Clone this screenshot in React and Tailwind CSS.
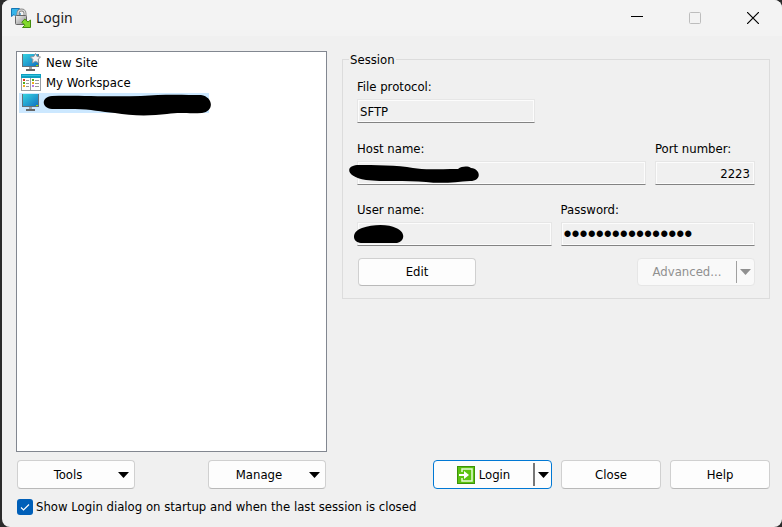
const fieldClass =
  'block h-6 w-full rounded-none border border-[#e6e6e6] border-b-[#838383] bg-[#f0f0f0] px-0.5 shadow-[inset_0_0_0_1px_#fcfcfc] outline-none';

const buttonClass =
  'flex items-center justify-center rounded border border-[#d0d0d0] border-b-[#b9b9b9] bg-[#fdfdfd]';

function Field({ id, label, className, inputClassName = '', children, ...input }) {
  return (
    <div className={className}>
      <label htmlFor={id} className="block h-4 leading-4">{label}</label>
      <div className="relative mt-1">
        <input id={id} readOnly className={`${fieldClass} ${inputClassName}`} {...input} />
        {children}
      </div>
    </div>
  );
}

function Arrow({ className = '' }) {
  return (
    <svg className={className} width="11" height="6" viewBox="0 0 11 6" fill="currentColor" aria-hidden="true">
      <path d="M0 0h11L5.500 6z" />
    </svg>
  );
}

function Monitor({ star }) {
  return (
    <svg width="20" height="20" viewBox="0 0 20 20" aria-hidden="true">
      <defs>
        <linearGradient id="screen" x1="0" y1="0" x2="1" y2="1">
          <stop offset="0" stopColor="#36d3df" />
          <stop offset="1" stopColor="#1173c4" />
        </linearGradient>
      </defs>
      <rect x="1" y="1" width="17" height="13" fill="#66707a" />
      <rect x="2" y="1" width="15" height="12" fill="url(#screen)" />
      <path d="M15 12h2v1h-2z" fill="#9be000" />
      <path d="M8 14h3v2H8z" fill="#a5a5a5" />
      <path d="M5 16h9v2H5z" fill="#666" />
      {star && (
        <path
          d="M14.500 0.500l1.500 3 3.500.400-2.300 2.500.600 3.400-3.300-1.500-3.100 1.600.500-3.500-2.400-2.400 3.400-.500z"
          fill="#f2f3f5"
          stroke="#8f949b"
          strokeWidth="1"
        />
      )}
    </svg>
  );
}

function Workspace() {
  return (
    <svg width="20" height="20" viewBox="0 0 20 20" aria-hidden="true">
      <rect x="0.500" y="2.500" width="19" height="15" fill="#fff" stroke="#9a9fa4" />
      <path d="M0 1h20v4H0z" fill="#0f9fc0" />
      <path d="M1 2h18v1H1z" fill="#35c3dd" />
      <path d="M9.500 5v12" stroke="#9a9fa4" />
      <path d="M2 6h2v2H2z" fill="#e0401c" />
      <path d="M2 9h2v2H2z" fill="#4fae1d" />
      <path d="M2 12h2v2H2z" fill="#f0ac1c" />
      <path d="M11 6h2v2h-2z" fill="#4fae1d" />
      <path d="M11 9h2v2h-2z" fill="#f0ac1c" />
      <path d="M11 12h2v2h-2z" fill="#b877e0" />
      <path d="M5 7.500h3M5 10.500h3M5 13.500h3M14 7.500h4M14 10.500h4M14 13.500h4" stroke="#999" />
    </svg>
  );
}

function AppIcon() {
  return (
    <svg width="20" height="20" viewBox="0 0 20 20" aria-hidden="true">
      <defs>
        <linearGradient id="lock" x1="0" y1="0" x2="1" y2="1">
          <stop offset="0" stopColor="#f1f1f1" />
          <stop offset="1" stopColor="#8b8b8b" />
        </linearGradient>
      </defs>
      <path d="M0.500 0.500h8L6.500 3l3 3-3.500 3.500-3-3-2.500 2z" fill="#35b5ea" stroke="#1676b4" />
      <path d="M7 8V5.500a3.500 3.500 0 0 1 7 0V8" fill="none" stroke="#888" strokeWidth="3" />
      <path d="M7 8V5.500a3.500 3.500 0 0 1 7 0V8" fill="none" stroke="#ddd" strokeWidth="1.200" />
      <rect x="4.500" y="7.500" width="11" height="9" rx="1" fill="url(#lock)" stroke="#666" />
      <path d="M19.500 19.500h-8l2.300-2.300-3-3 3-3.200 3.200 3 2.500-2z" fill="#82d92c" stroke="#438d0d" />
    </svg>
  );
}

function LoginIcon() {
  return (
    <svg width="18" height="18" viewBox="0 0 18 18" fill="none" aria-hidden="true">
      <rect x="0.500" y="0.500" width="17" height="17" fill="#5cc311" stroke="#3d9208" />
      <path d="M5 6V3h10v12H5v-3" stroke="#e6fbd5" strokeWidth="1.500" />
      <path d="M2 8h5V5l5 4-5 4v-3H2z" fill="#fff" />
    </svg>
  );
}

export default function App() {
  return (
    <div className="flex min-h-screen flex-col bg-[#2b2b2b] pl-0.5 font-['DejaVu_Sans_Condensed','DejaVu_Sans',sans-serif] text-[13px] leading-4 text-black">
      <div className="flex flex-1 flex-col overflow-hidden rounded-lg bg-[#f0f0f0]">
        <header className="flex h-9 items-center bg-[#f3f3f3] pl-[9px] font-['Noto_Sans',sans-serif]">
          <AppIcon />
          <h1 className="ml-[5px] text-[14px] leading-5 text-[#1a1a1a]">Login</h1>
          <div className="ml-auto flex h-full">
            <button type="button" aria-label="Minimize" className="flex w-[58px] items-center justify-center">
              <svg width="12" height="12" viewBox="0 0 12 12" aria-hidden="true"><path d="M0 4.500h12" stroke="#000" /></svg>
            </button>
            <button type="button" aria-label="Maximize" disabled className="flex w-[58px] items-center justify-center">
              <svg width="12" height="12" viewBox="0 0 12 12" fill="none" aria-hidden="true"><rect x="0.500" y="0.500" width="11" height="11" rx="1" stroke="#bdbdbd" /></svg>
            </button>
            <button type="button" aria-label="Close window" className="flex w-[58px] items-center justify-center">
              <svg width="12" height="12" viewBox="0 0 12 12" aria-hidden="true"><path d="M0 0l12 12M12 0L0 12" stroke="#000" strokeWidth="1.200" /></svg>
            </button>
          </div>
        </header>

        <main className="flex flex-1 flex-col pt-[15px] pr-3 pb-3 pl-3.5">
          <div className="flex flex-1 items-stretch gap-[15px]">
            <ul className="w-[311px] shrink-0 border border-[#828790] bg-white px-0.5 pt-px">
              <li className="flex h-5 items-center gap-[5px] pl-0.5"><Monitor star />New Site</li>
              <li className="flex h-5 items-center gap-[5px] pl-0.5"><Workspace />My Workspace</li>
              <li className="relative flex h-5 w-[190px] items-center bg-[#cce8ff] pl-0.5">
                <Monitor />
                <svg className="absolute top-px left-6" width="170" height="23" viewBox="0 0 170 23" aria-hidden="true">
                  <path d="M9 2C30 1 62 3 98 2C120 0 144 1 158 1C171 3 171 18 159 19C145 20 138 18 124 20C108 22 88 22 72 19C58 18 48 15 32 15H9C-2 14-2 3 9 2z" />
                </svg>
              </li>
            </ul>

            <fieldset className="min-w-0 flex-1 self-start border border-[#dcdcdc] px-3.5 pt-[11px] pb-3">
              <legend className="-ml-2 h-[17px] px-px leading-[17px]">Session</legend>
              <Field id="protocol" label="File protocol:" className="w-[178px]" defaultValue="SFTP" />
              <div className="mt-[18px] flex gap-[9px]">
                <Field id="host" label="Host name:" className="min-w-0 flex-1">
                  <svg className="absolute top-[3px] -left-[9px]" width="132" height="21" viewBox="0 0 132 21" aria-hidden="true">
                    <path d="M9 1C26 1 50 1 65 4C76 6 88 5 110 5C114 2 120 2 123 4C133 5 134 17 122 17C108 18 94 20 78 18C58 16 34 18 18 16C-2 13-3 2 9 1z" />
                  </svg>
                </Field>
                <Field id="port" label="Port number:" className="w-[100px]" inputClassName="pr-1 text-right" defaultValue="2223" />
              </div>
              <div className="mt-[17px] flex gap-[9px]">
                <Field id="user" label="User name:" className="min-w-0 flex-1">
                  <svg className="absolute top-[3px] -left-[3px]" width="50" height="19" viewBox="0 0 50 19" aria-hidden="true">
                    <path d="M8 3C19-1 35-1 42 3C52 7 51 16 43 18H7C-3 17-2 6 8 3z" />
                  </svg>
                </Field>
                <Field
                  id="password"
                  label="Password:"
                  className="min-w-0 flex-1"
                  inputClassName="font-['Liberation_Sans',sans-serif] text-[23px]"
                  type="password"
                  defaultValue="xxxxxxxxxxxxxxxx"
                />
              </div>
              <div className="mt-3 flex justify-between pl-px">
                <button type="button" className={`${buttonClass} h-7 w-[118px]`}>Edit</button>
                <button type="button" disabled className="flex h-7 w-[118px] items-center rounded border border-[#e6e6e6] bg-[#f9f9f9] text-[#909090]">
                  <span className="flex-1 text-center">Advanced...</span>
                  <span className="flex h-[22px] w-[18px] items-center justify-center border-l border-[#a0a0a0]"><Arrow /></span>
                </button>
              </div>
            </fieldset>
          </div>

          <div className="mt-2 flex h-[29px] items-stretch justify-between pl-px">
            <div className="flex w-[309px] justify-between">
              <button type="button" className={`${buttonClass} w-[118px]`}>
                <span className="flex-1 text-center">Tools</span><Arrow className="mr-[5px]" />
              </button>
              <button type="button" className={`${buttonClass} w-[118px]`}>
                <span className="flex-1 text-center">Manage</span><Arrow className="mr-[5px]" />
              </button>
            </div>
            <div className="flex gap-[9px]">
              <button type="button" className="flex w-[119px] items-center rounded border border-[#0078d4] bg-[#fdfdfd]">
                <span className="flex flex-1 items-center justify-center gap-1"><LoginIcon />Login</span>
                <span className="flex h-[23px] w-[18px] items-center justify-center border-l-2 border-[#777]"><Arrow /></span>
              </button>
              <button type="button" className={`${buttonClass} w-[100px]`}>Close</button>
              <button type="button" className={`${buttonClass} w-[100px]`}>Help</button>
            </div>
          </div>

          <label className="mt-2.5 flex h-4 items-center gap-[3px] self-start pl-px">
            <span className="relative size-4">
              <input type="checkbox" defaultChecked className="block size-4 appearance-none rounded-[3px] bg-[#005fb8]" />
              <svg className="pointer-events-none absolute inset-0" width="16" height="16" viewBox="0 0 16 16" fill="none" aria-hidden="true">
                <path d="M4 8.500l2.500 2.500L12 5.500" stroke="#fff" strokeWidth="1.100" />
              </svg>
            </span>
            Show Login dialog on startup and when the last session is closed
          </label>
        </main>
      </div>
    </div>
  );
}
